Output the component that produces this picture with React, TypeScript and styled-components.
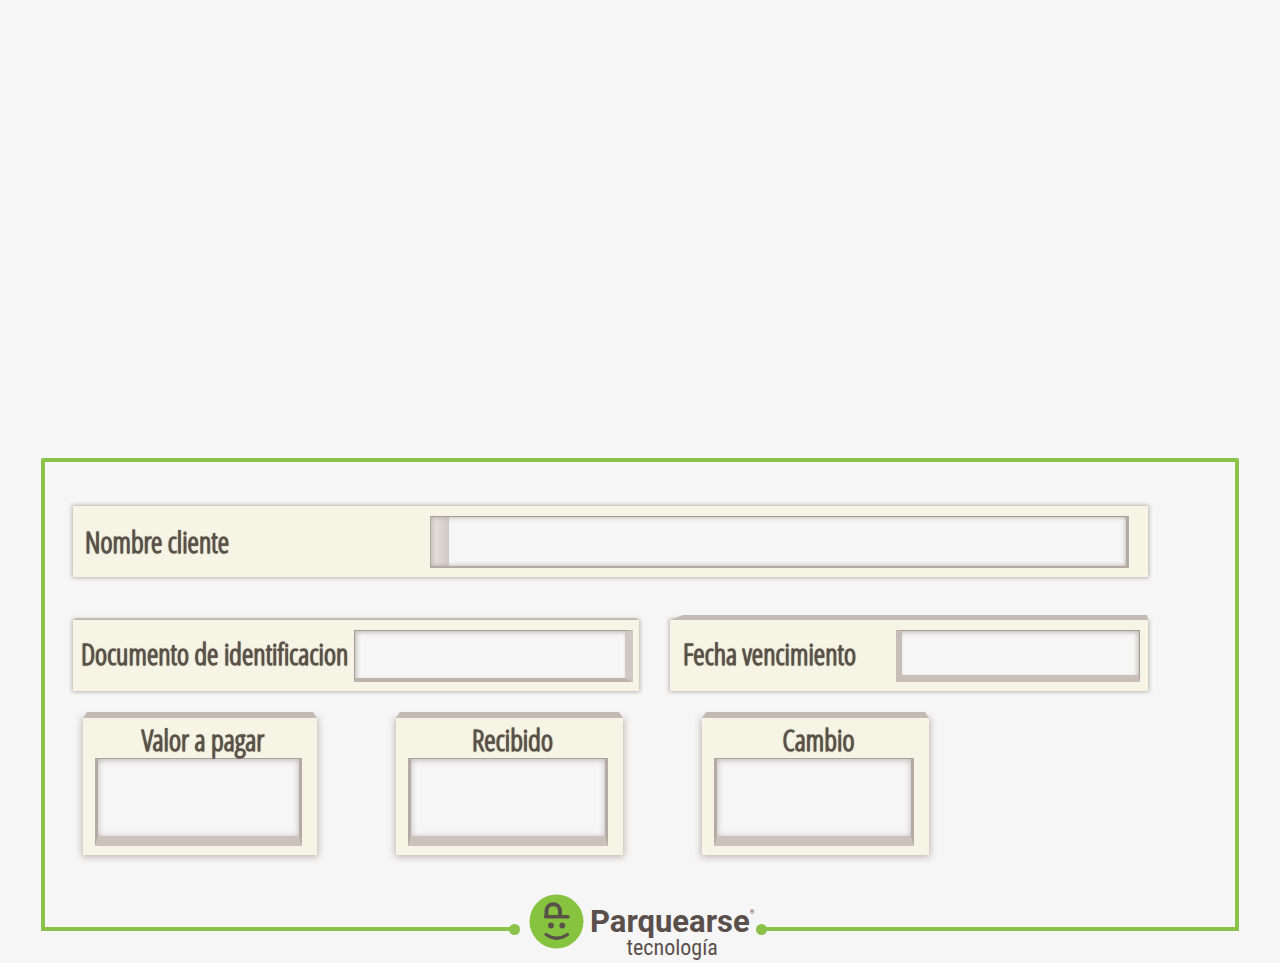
import React from "react";
import styled, { createGlobalStyle } from "styled-components";

const GlobalStyle = createGlobalStyle`
  *, *::before, *::after { box-sizing: border-box; }
  body {
    margin: 0;
    background: #f6f6f6;
    color: #5a5149;
    font-family: "Open Sans Condensed Light", "Roboto Condensed", Roboto, sans-serif;
  }
`;

const green = "#8bc34a";
const cream = "#f6f4e5";

const Page = styled.main`
  min-height: 100vh;
  display: flex;
  flex-direction: column;
  justify-content: flex-end;
  padding: 0 41px;
`;

const Frame = styled.form`
  display: flex;
  flex-direction: column;
  border: 4px solid ${green};
  border-bottom: 0;
  border-radius: 2px 2px 0 0;
  padding: 44px 87px 39px 28px;
`;

const Row = styled.div`
  display: grid;
  grid-template-columns: 566fr 478fr;
  gap: 31px;
  margin: 43px 0 27px;

  label { padding-bottom: 4px; }
`;

const CardRow = styled.div`
  display: grid;
  grid-template-columns: 234fr 227fr 227fr;
  gap: 79px;
  padding: 0 219px 0 10px;
`;

const Panel = styled.div<{ $lip?: number; $cut?: string }>`
  position: relative;
  height: 71px;
  display: flex;
  align-items: center;
  background: ${cream};
  box-shadow: 0 0 4px 1px #b9b3ae;

  &::before {
    content: "";
    position: absolute;
    left: 0;
    right: 0;
    bottom: 100%;
    height: ${(p) => p.$lip ?? 0}px;
    background: #c4bab5;
    clip-path: ${(p) => p.$cut ?? "none"};
  }
`;

const Card = styled(Panel)`
  height: 137px;
  flex-direction: column;
  align-items: stretch;
  padding: 0 15px 9px 12px;
  box-shadow: 0 1px 7px 1px #bdb3b1;
`;

const LabelText = styled.label`
  font-size: 29px;
  font-weight: 700;
  line-height: 40px;
  white-space: nowrap;
  text-shadow: 0 0 1px #5a5149;
`;

const Label = styled(LabelText)<{ $inset: number }>`
  flex: 1;
  padding-left: ${(p) => p.$inset}px;
`;

const CardLabel = styled(LabelText)`
  position: relative;
  z-index: 1;
  height: 40px;
  padding-left: 9px;
  line-height: 43px;
  text-align: center;
`;

const Well = styled.input`
  min-width: 0;
  height: 52px;
  margin: 0;
  padding: 0 8px;
  border-style: solid;
  border-radius: 0;
  outline: 0;
  background: #f6f6f6;
  color: inherit;
  font: inherit;
  font-size: 24px;
`;

const NameWell = styled(Well)`
  width: 65%;
  margin-right: 19px;
  padding-left: 28px;
  border-width: 1px 3px 2px 1px;
  border-color: #a49c96 #b4aaa4 #b4aaa4 #b0a8a2;
  background: linear-gradient(90deg, #dfdad2, #e2ddd7 5px, #cfc8c6 18px, #f6f6f6 18px);
  box-shadow: inset 0 0 5px #b4aaa4;
`;

const DocumentWell = styled(Well)`
  width: 279px;
  margin-right: 6px;
  border-width: 1px 8px 4px 1px;
  border-color: #a49c96 #d0c8c2 #beb4ae #a49c96;
  box-shadow: inset 2px 2px 4px #c8c2be;
`;

const DateWell = styled(Well)`
  width: 244px;
  margin-right: 8px;
  border-width: 1px 1px 7px 6px;
  border-color: #a49c96 #a49c96 #c8bfb9 #c6bdb7;
  box-shadow: inset -2px 2px 4px #c8c2be;
`;

const CardWell = styled(Well)`
  width: 100%;
  height: 88px;
  border-width: 1px 3px 10px;
  border-color: #a9a09c #b4aaa5 #cbc2bd;
  box-shadow: inset 0 1px 6px #bdb3b3;
`;

const Footer = styled.footer`
  display: grid;
  grid-template-columns: 474fr 246px 478fr;
  height: 69px;
`;

const Rail = styled.div<{ $side: "left" | "right" }>`
  position: relative;
  height: 37px;
  border-bottom: 4px solid ${green};
  border-${(p) => p.$side}: 4px solid ${green};

  &::after {
    content: "";
    position: absolute;
    ${(p) => (p.$side === "left" ? "right" : "left")}: -5px;
    bottom: -8px;
    width: 11px;
    height: 11px;
    border-radius: 50%;
    background: ${green};
  }
`;

const Brand = styled.div`
  display: flex;
  align-items: flex-start;
  gap: 6px;
  padding-left: 14px;
  color: #5a4f4b;

  svg { flex: none; }
`;

const Words = styled.div`
  display: flex;
  flex-direction: column;
  align-items: center;
  padding-top: 11px;
`;

const Name = styled.strong`
  display: flex;
  font-family: Roboto, sans-serif;
  font-size: 31px;
  line-height: 34px;
  font-weight: 700;
`;

const Mark = styled.sup`
  font-size: 6px;
  line-height: 6px;
  padding-top: 4px;
  vertical-align: baseline;
`;

const Tag = styled.span`
  font-family: "Roboto Condensed", Roboto, sans-serif;
  font-size: 22px;
  line-height: 18px;
`;

const slant = "polygon(13px 0, calc(100% - 1px) 0, 100% 100%, 0 100%)";
const bevel = "polygon(4px 0, calc(100% - 4px) 0, 100% 100%, 0 100%)";

const cards = [
  { id: "valor", label: "Valor a pagar" },
  { id: "recibido", label: "Recibido" },
  { id: "cambio", label: "Cambio" },
];

function Face() {
  return (
    <svg width="55" height="55" viewBox="0 0 55 55" aria-hidden="true">
      <circle cx="27.500" cy="27.500" r="27" fill="#86c440" />
      <g fill="none" stroke="#5a5149">
        <path d="M16.500 22.700H39" strokeWidth="3.600" strokeLinecap="round" />
        <path d="M17.500 22.700V17.500C17.500 7.800 31 7.800 31 17.500V22.700" strokeWidth="4" />
        <path d="M17 40.500Q27.700 48 38.500 40.500" strokeWidth="3.200" strokeLinecap="round" />
      </g>
      <circle cx="22" cy="31.500" r="2.900" fill="#5a5149" />
      <circle cx="33.300" cy="31.500" r="2.900" fill="#5a5149" />
    </svg>
  );
}

export default function App() {
  return (
    <>
      <GlobalStyle />
      <Page>
        <Frame>
          <Panel>
            <Label htmlFor="nombre" $inset={12}>Nombre cliente</Label>
            <NameWell id="nombre" type="text" />
          </Panel>
          <Row>
            <Panel $lip={2} $cut={bevel}>
              <Label htmlFor="documento" $inset={8}>Documento de identificacion</Label>
              <DocumentWell id="documento" type="text" />
            </Panel>
            <Panel $lip={5} $cut={slant}>
              <Label htmlFor="fecha" $inset={13}>Fecha vencimiento</Label>
              <DateWell id="fecha" type="text" />
            </Panel>
          </Row>
          <CardRow>
            {cards.map((c) => (
              <Card key={c.id} $lip={6} $cut={bevel}>
                <CardLabel htmlFor={c.id}>{c.label}</CardLabel>
                <CardWell id={c.id} type="text" />
              </Card>
            ))}
          </CardRow>
        </Frame>
        <Footer>
          <Rail $side="left" />
          <Brand>
            <Face />
            <Words>
              <Name>Parquearse<Mark>®</Mark></Name>
              <Tag>tecnología</Tag>
            </Words>
          </Brand>
          <Rail $side="right" />
        </Footer>
      </Page>
    </>
  );
}
